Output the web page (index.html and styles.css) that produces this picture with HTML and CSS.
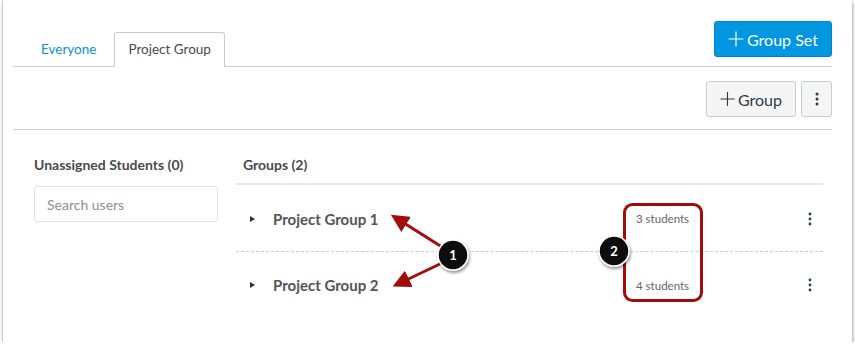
FILE: index.html
```html
<!DOCTYPE html>
<html lang="en">

<head>
    <meta charset="UTF-8">
    <title>Groups</title>
    <link rel="stylesheet" href="styles.css">
</head>

<body>
    <div class="frame">
        <div class="header">
            <div class="tabs">
                <div class="tab">Everyone</div>
                <div class="tab active">Project Group</div>
            </div>
            <button class="btn btn-primary">
                <svg class="plus" width="16" height="16" viewBox="0 0 16 16"><path d="M8 0.5V15.5M0.5 8H15.5"/></svg>Group Set
            </button>
        </div>

        <div class="toolbar">
            <button class="btn">
                <svg class="plus" width="16" height="16" viewBox="0 0 16 16"><path d="M8 0.5V15.5M0.5 8H15.5"/></svg>Group
            </button>
            <button class="btn btn-kebab">
                <svg width="4" height="14" viewBox="0 0 4 14"><circle cx="2" cy="2" r="1.5"/><circle cx="2" cy="7" r="1.5"/><circle cx="2" cy="12" r="1.5"/></svg>
            </button>
        </div>

        <div class="content">
            <div class="unassigned">
                <h2 class="col-title">Unassigned Students (0)</h2>
                <input class="search" type="text" placeholder="Search users">
            </div>

            <div class="groups">
                <h2 class="col-title groups-title">Groups (2)</h2>
                <div class="group-row">
                    <span class="caret"></span>
                    <span class="group-name">Project Group 1</span>
                    <span class="count">3 students</span>
                    <svg class="row-kebab" width="4" height="14" viewBox="0 0 4 14"><circle cx="2" cy="2" r="1.4"/><circle cx="2" cy="7" r="1.4"/><circle cx="2" cy="12" r="1.4"/></svg>
                </div>
                <div class="group-row">
                    <span class="caret"></span>
                    <span class="group-name">Project Group 2</span>
                    <span class="count">4 students</span>
                    <svg class="row-kebab" width="4" height="14" viewBox="0 0 4 14"><circle cx="2" cy="2" r="1.4"/><circle cx="2" cy="7" r="1.4"/><circle cx="2" cy="12" r="1.4"/></svg>
                </div>
            </div>
        </div>
    </div>

    <!-- callouts drawn over the screenshot -->
    <svg class="callouts" width="855" height="345" viewBox="0 0 855 345">
        <defs>
            <marker id="head" markerWidth="6" markerHeight="6" refX="4" refY="3" orient="auto" markerUnits="strokeWidth">
                <path d="M0,0 L6,3 L0,6 Z" fill="#a10c0c"/>
            </marker>
            <filter id="shadow" x="-50%" y="-50%" width="200%" height="200%">
                <feDropShadow dx="1" dy="2" stdDeviation="1.5" flood-color="#000" flood-opacity="0.45"/>
            </filter>
        </defs>
        <line x1="442" y1="247" x2="396" y2="218" stroke="#a10c0c" stroke-width="3" marker-end="url(#head)"/>
        <line x1="442" y1="263" x2="398" y2="284" stroke="#a10c0c" stroke-width="3" marker-end="url(#head)"/>
        <rect x="624.5" y="204.5" width="77" height="96" rx="8" fill="none" stroke="#a10c0c" stroke-width="3"/>
        <g filter="url(#shadow)">
            <circle cx="453" cy="255" r="15" fill="#111" stroke="#fff" stroke-width="1.5"/>
            <circle cx="614" cy="251" r="15" fill="#111" stroke="#fff" stroke-width="1.5"/>
        </g>
        <text x="453" y="260" class="callout-num">1</text>
        <text x="614" y="256" class="callout-num">2</text>
    </svg>
</body>

</html>
```

FILE: styles.css
```css
body {
    margin: 0;
    background-color: #fff;
    font-family: Lato, "Open Sans", sans-serif;
    color: #4a4a4a;
}

.frame {
    box-sizing: border-box;
    margin-left: 2px;
    width: 850px;
    height: 342px;
    padding: 0 20px 0 10px;
    background-color: #fff;
    border-left: 1px solid #cfcfcf;
    box-shadow: 1px 2px 3px rgba(0, 0, 0, 0.35);
}

.header {
    display: flex;
    justify-content: space-between;
    align-items: flex-end;
    padding-top: 21px;
    border-bottom: 1px solid #c7cdd1;
}

.tabs {
    display: flex;
    gap: 4px;
    padding-left: 14px;
    margin-bottom: -1px;
}

.tab {
    padding: 0 13px;
    height: 33px;
    line-height: 33px;
    font-size: 13.5px;
    color: #0b8fdb;
    border: 1px solid transparent;
    border-bottom: none;
}

.tab.active {
    color: #4a4a4a;
    border-color: #c7cdd1;
    border-radius: 3px 3px 0 0;
    background-color: #fff;
    height: 34px;
}

.btn {
    display: flex;
    align-items: center;
    justify-content: center;
    box-sizing: border-box;
    height: 36px;
    padding: 0 13px;
    font-family: Lato, "Open Sans", sans-serif;
    font-size: 16px;
    color: #2d3b45;
    background-color: #f5f5f5;
    border: 1px solid #c7cdd1;
    border-radius: 3px;
}

.btn-primary {
    margin-bottom: 9px;
    width: 118px;
    color: #fff;
    background-color: #0096e0;
    border-color: #0084c7;
}

.plus {
    stroke: currentColor;
    stroke-width: 1.2;
    margin-right: 3px;
}

.toolbar {
    display: flex;
    justify-content: flex-end;
    gap: 5px;
    padding: 14px 0 12px;
    border-bottom: 1px solid #c7cdd1;
}

.toolbar .btn {
    width: 90px;
}

.toolbar .btn-kebab {
    width: 31px;
    padding: 0;
}

.btn-kebab svg,
.row-kebab {
    fill: #2d3b45;
}

.content {
    display: flex;
    padding-top: 24px;
}

.col-title {
    margin: 0;
    font-size: 14px;
    font-weight: 700;
    color: #4a4a4a;
    height: 32px;
    line-height: 22px;
}

.unassigned {
    width: 184px;
    margin-left: 21px;
    margin-right: 18px;
}

.search {
    box-sizing: border-box;
    width: 184px;
    height: 36px;
    margin-top: 0;
    padding: 0 12px;
    font-family: Lato, "Open Sans", sans-serif;
    font-size: 14px;
    border: 1px solid #dde2e5;
    border-radius: 3px;
    outline: none;
}

.search::placeholder {
    color: #8f8f8f;
}

.groups {
    flex: 1;
    margin-right: 9px;
}

.groups-title {
    padding-left: 7px;
    border-bottom: 2px solid #e6e9eb;
    height: 29px;
}

.group-row {
    display: flex;
    align-items: center;
    box-sizing: border-box;
    height: 66px;
    padding-left: 14px;
    padding-top: 1px;
}

.group-row + .group-row {
    border-top: 1px dashed #c7cdd1;
}

.caret {
    width: 0;
    height: 0;
    border-top: 3.5px solid transparent;
    border-bottom: 3.5px solid transparent;
    border-left: 5px solid #333;
    margin-right: 18px;
}

.group-name {
    width: 363px;
    font-size: 15px;
    font-weight: 700;
    color: #555;
}

.count {
    width: 172px;
    font-size: 11.5px;
    color: #666;
}

.callouts {
    position: absolute;
    top: 0;
    left: 0;
    pointer-events: none;
}

.callout-num {
    fill: #fff;
    font-family: Lato, "Open Sans", sans-serif;
    font-size: 13px;
    font-weight: 700;
    text-anchor: middle;
}
```
